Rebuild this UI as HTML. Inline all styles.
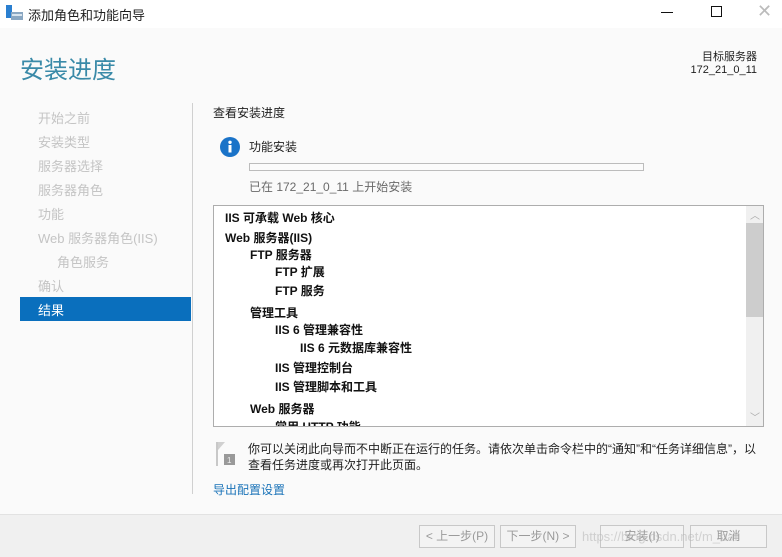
<!DOCTYPE html>
<html><head><meta charset="utf-8"><style>
*{margin:0;padding:0;box-sizing:border-box}
body{width:782px;height:557px;position:relative;background:#fafafa;font-family:"Liberation Sans","Noto Sans CJK SC",sans-serif;overflow:hidden;color:#1e1e1e}
.a{position:absolute;white-space:nowrap}
.tb{left:0;top:0;width:782px;height:28px;background:#fff}
.nav{font-size:13px;color:#c4c4c4;left:38px}
.li{font-size:12px;font-weight:bold;color:#111}
.btn{position:absolute;top:525px;height:23px;border:1px solid #c8c8c8;background:#f3f3f3;font-size:12px;color:#9a9a9a;text-align:center;line-height:21px}
</style></head><body>
<div class="a tb"></div>
<svg class="a" style="left:6px;top:5px" width="18" height="16"><rect x="0" y="0" width="6" height="13" fill="#2a7fd0"/><rect x="5" y="7" width="12" height="8" fill="#8aa7c2"/><rect x="6" y="9" width="10" height="2" fill="#d8e4ee"/></svg>
<div class="a" style="left:28px;top:5px;font-size:13px">添加角色和功能向导</div>
<div class="a" style="left:661px;top:12px;width:12px;height:1px;background:#111"></div>
<div class="a" style="left:711px;top:6px;width:11px;height:11px;border:1px solid #111"></div>
<div class="a" style="left:757px;top:1px;font-size:18px;color:#bbb;font-weight:200">✕</div>
<div class="a" style="left:20px;top:50px;font-size:24px;color:#3a8aa8">安装进度</div>
<div class="a" style="left:680px;top:51px;font-size:11px;width:77px;text-align:right;line-height:13px">目标服务器<br>172_21_0_11</div>
<div class="a nav" style="top:108px">开始之前</div>
<div class="a nav" style="top:132px">安装类型</div>
<div class="a nav" style="top:156px">服务器选择</div>
<div class="a nav" style="top:180px">服务器角色</div>
<div class="a nav" style="top:204px">功能</div>
<div class="a nav" style="top:228px">Web 服务器角色(IIS)</div>
<div class="a nav" style="top:252px;left:57px">角色服务</div>
<div class="a nav" style="top:276px">确认</div>
<div class="a" style="left:20px;top:297px;width:171px;height:24px;background:#0a6fbd"></div>
<div class="a nav" style="top:300px;color:#fff">结果</div>
<div class="a" style="left:192px;top:103px;width:1px;height:391px;background:#d0d0d0"></div>
<div class="a" style="left:213px;top:104px;font-size:12px">查看安装进度</div>
<svg class="a" style="left:220px;top:137px" width="20" height="20"><circle cx="10" cy="10" r="10" fill="#1a73c8"/><rect x="8.5" y="8" width="3" height="7.5" fill="#fff"/><circle cx="10" cy="5.3" r="1.7" fill="#fff"/></svg>
<div class="a" style="left:249px;top:138px;font-size:12px">功能安装</div>
<div class="a" style="left:249px;top:163px;width:395px;height:8px;border:1px solid #bcbcbc;background:#fbfbfb"></div>
<div class="a" style="left:249px;top:178px;font-size:12px;color:#6a6a6a">已在 172_21_0_11 上开始安装</div>
<div class="a" style="left:213px;top:205px;width:551px;height:222px;border:1px solid #adadad;background:#fff;overflow:hidden">
<div class="a" style="left:532px;top:0;width:17px;height:220px;background:#f0f0f0"></div>
<div class="a" style="left:532px;top:17px;width:17px;height:94px;background:#cdcdcd"></div>
<div class="a" style="left:536px;top:1px;font-size:10px;color:#aaa">︿</div>
<div class="a" style="left:536px;top:203px;font-size:10px;color:#aaa">﹀</div>
<div class="a li" style="left:11px;top:3px">IIS 可承载 Web 核心</div>
<div class="a li" style="left:11px;top:23px">Web 服务器(IIS)</div>
<div class="a li" style="left:36px;top:40px">FTP 服务器</div>
<div class="a li" style="left:61px;top:57px">FTP 扩展</div>
<div class="a li" style="left:61px;top:76px">FTP 服务</div>
<div class="a li" style="left:36px;top:98px">管理工具</div>
<div class="a li" style="left:61px;top:115px">IIS 6 管理兼容性</div>
<div class="a li" style="left:86px;top:133px">IIS 6 元数据库兼容性</div>
<div class="a li" style="left:61px;top:153px">IIS 管理控制台</div>
<div class="a li" style="left:61px;top:172px">IIS 管理脚本和工具</div>
<div class="a li" style="left:36px;top:194px">Web 服务器</div>
<div class="a li" style="left:61px;top:212px">常用 HTTP 功能</div>
</div>
<svg class="a" style="left:215px;top:440px" width="24" height="28"><path d="M2 2 L2 26" stroke="#c8c8c8" stroke-width="2"/><path d="M3 2 L10 2 L3 10Z" fill="#d0d0d0"/><rect x="9" y="14" width="11" height="11" fill="#999"/><text x="12" y="23" font-size="8" fill="#eee">1</text></svg>
<div class="a" style="left:248px;top:441px;font-size:12px;line-height:16px">你可以关闭此向导而不中断正在运行的任务。请依次单击命令栏中的“通知”和“任务详细信息”，以<br>查看任务进度或再次打开此页面。</div>
<div class="a" style="left:213px;top:481px;font-size:12px;color:#1a73b8">导出配置设置</div>
<div class="a" style="left:0;top:514px;width:782px;height:43px;background:#f0f0f0;border-top:1px solid #e2e2e2"></div>
<div class="btn" style="left:419px;width:76px">&lt; 上一步(P)</div>
<div class="btn" style="left:500px;width:76px">下一步(N) &gt;</div>
<div class="btn" style="left:600px;width:84px">安装(I)</div>
<div class="btn" style="left:690px;width:77px">取消</div>
<div class="a" style="left:582px;top:529px;font-size:13px;color:rgba(180,180,180,0.55)">https://blog.csdn.net/m_bai</div>
</body></html>
